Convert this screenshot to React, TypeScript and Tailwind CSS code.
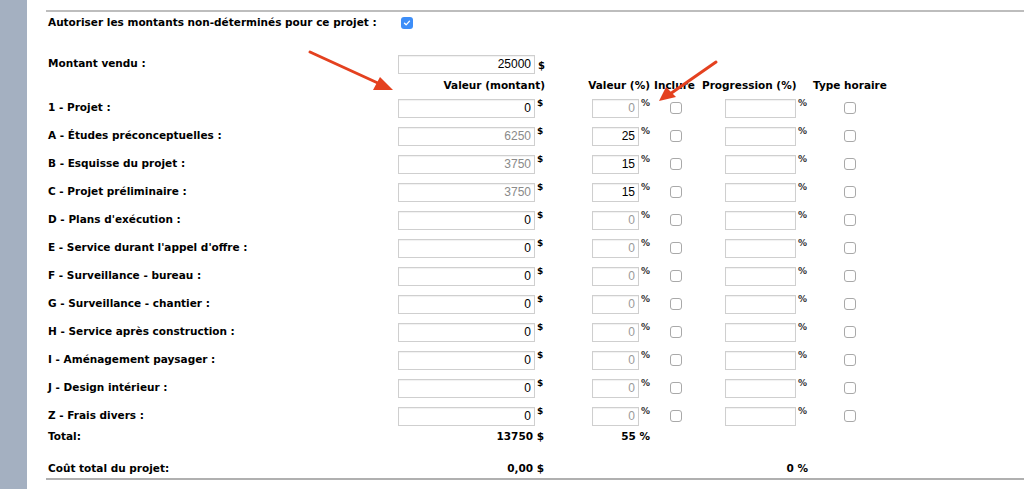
import React from 'react';

type Row = {
  label: string;
  amount: string;
  amountMuted: boolean;
  percent: string;
  percentMuted: boolean;
};

const rows: Row[] = [
  { label: '1 - Projet :', amount: '0', amountMuted: false, percent: '0', percentMuted: true },
  { label: 'A - Études préconceptuelles :', amount: '6250', amountMuted: true, percent: '25', percentMuted: false },
  { label: 'B - Esquisse du projet :', amount: '3750', amountMuted: true, percent: '15', percentMuted: false },
  { label: 'C - Projet préliminaire :', amount: '3750', amountMuted: true, percent: '15', percentMuted: false },
  { label: "D - Plans d'exécution :", amount: '0', amountMuted: false, percent: '0', percentMuted: true },
  { label: "E - Service durant l'appel d'offre :", amount: '0', amountMuted: false, percent: '0', percentMuted: true },
  { label: 'F - Surveillance - bureau :', amount: '0', amountMuted: false, percent: '0', percentMuted: true },
  { label: 'G - Surveillance - chantier :', amount: '0', amountMuted: false, percent: '0', percentMuted: true },
  { label: 'H - Service après construction :', amount: '0', amountMuted: false, percent: '0', percentMuted: true },
  { label: 'I - Aménagement paysager :', amount: '0', amountMuted: false, percent: '0', percentMuted: true },
  { label: 'J - Design intérieur :', amount: '0', amountMuted: false, percent: '0', percentMuted: true },
  { label: 'Z - Frais divers :', amount: '0', amountMuted: false, percent: '0', percentMuted: true },
];

const inputClass =
  "h-[19px] border border-[#cfcfcf] bg-white px-[3px] text-right font-['Liberation_Sans',Arial,sans-serif] text-[12px] font-normal leading-[17px] shadow-[inset_0_1px_1px_rgba(0,0,0,0.06)] outline-none";

function Box({ checked = false }: { checked?: boolean }) {
  if (checked) {
    return (
      <span className="flex h-[12px] w-[12px] items-center justify-center rounded-[3px] bg-[#3d8ef8]">
        <svg viewBox="0 0 12 12" className="h-[10px] w-[10px]">
          <path d="M3 6.2 L5 8.2 L9 3.8" fill="none" stroke="white" strokeWidth="1.6" strokeLinecap="round" strokeLinejoin="round" />
        </svg>
      </span>
    );
  }
  return <span className="block h-[12px] w-[12px] rounded-[3px] border border-[#a9a9a9] bg-white" />;
}

export default function App() {
  return (
    <div className="relative flex h-[489px] w-[1024px] overflow-hidden bg-white font-['DejaVu_Sans',Verdana,sans-serif] text-[10.5px] font-bold text-black">
      <div className="w-[27px] shrink-0 bg-[#a4b0c1]" />

      <div className="flex-1 pl-[19px] pt-[10px]">
        <div className="border-t-2 border-b-2 border-t-[#bdbdbd] border-b-[#b0b0b0]">
          <div className="flex h-[22px] items-center">
            <div className="w-[352px] pl-[2px]">Autoriser les montants non-déterminés pour ce projet :</div>
            <div className="pl-[3px]"><Box checked /></div>
          </div>

          <div className="mt-[16px] flex h-[28px] items-center">
            <div className="w-[352px] pl-[2px]">Montant vendu :</div>
            <input readOnly value="25000" className={`${inputClass} w-[137px] text-black`} />
            <span className="ml-[3px] mt-[2px] text-[10px]">$</span>
          </div>

          <div className="flex h-[16px] items-center whitespace-nowrap">
            <div className="w-[352px]" />
            <div className="w-[147px] text-right">Valeur (montant)</div>
            <div className="w-[105px] text-right">Valeur (%)</div>
            <div className="w-[51px] pl-[4px]">Inclure</div>
            <div className="w-[104px] pl-[1px]">Progression (%)</div>
            <div className="w-[90px] pl-[8px]">Type horaire</div>
          </div>

          {rows.map((row) => (
            <div key={row.label} className="flex h-[28px] items-center">
              <div className="w-[352px] pl-[2px]">{row.label}</div>
              <div className="flex w-[150px] items-start">
                <input
                  readOnly
                  value={row.amount}
                  className={`${inputClass} w-[137px] ${row.amountMuted ? 'text-[#8a8a8a]' : 'text-black'}`}
                />
                <span className="ml-[2px] -mt-[2px] text-[9px] leading-[12px]">$</span>
              </div>
              <div className="flex w-[104px] items-start justify-end pr-[2px]">
                <input
                  readOnly
                  value={row.percent}
                  className={`${inputClass} w-[47px] ${row.percentMuted ? 'text-[#9a9a9a]' : 'text-black'}`}
                />
                <span className="ml-[2px] -mt-[2px] w-[9px] text-[9px] leading-[12px] text-[#333]">%</span>
              </div>
              <div className="flex w-[48px] justify-center"><Box /></div>
              <div className="flex w-[110px] items-start pl-[25px]">
                <input readOnly value="" className={`${inputClass} w-[71px]`} />
                <span className="ml-[2px] -mt-[2px] text-[9px] leading-[12px] text-[#333]">%</span>
              </div>
              <div className="flex w-[80px] justify-center"><Box /></div>
            </div>
          ))}

          <div className="mt-[1px] flex h-[12px] items-center">
            <div className="w-[352px] pl-[2px]">Total:</div>
            <div className="w-[146px] text-right">13750 $</div>
            <div className="w-[106px] text-right">55 %</div>
          </div>

          <div className="mt-[18px] flex h-[17px] items-start">
            <div className="w-[352px] pl-[2px]">Coût total du projet:</div>
            <div className="w-[146px] text-right">0,00 $</div>
            <div className="w-[264px] text-right">0 %</div>
          </div>
        </div>
      </div>

      <svg className="pointer-events-none absolute inset-0" width="1024" height="489" viewBox="0 0 1024 489">
        <line x1="310" y1="52" x2="380" y2="84" stroke="#e4411f" strokeWidth="3" strokeLinecap="round" />
        <polygon points="393,90 373,90 380,77" fill="#e4411f" />
        <line x1="716" y1="62" x2="670" y2="94" stroke="#e4411f" strokeWidth="3" strokeLinecap="round" />
        <polygon points="659,101 666,87 676,97" fill="#e4411f" />
      </svg>
    </div>
  );
}
